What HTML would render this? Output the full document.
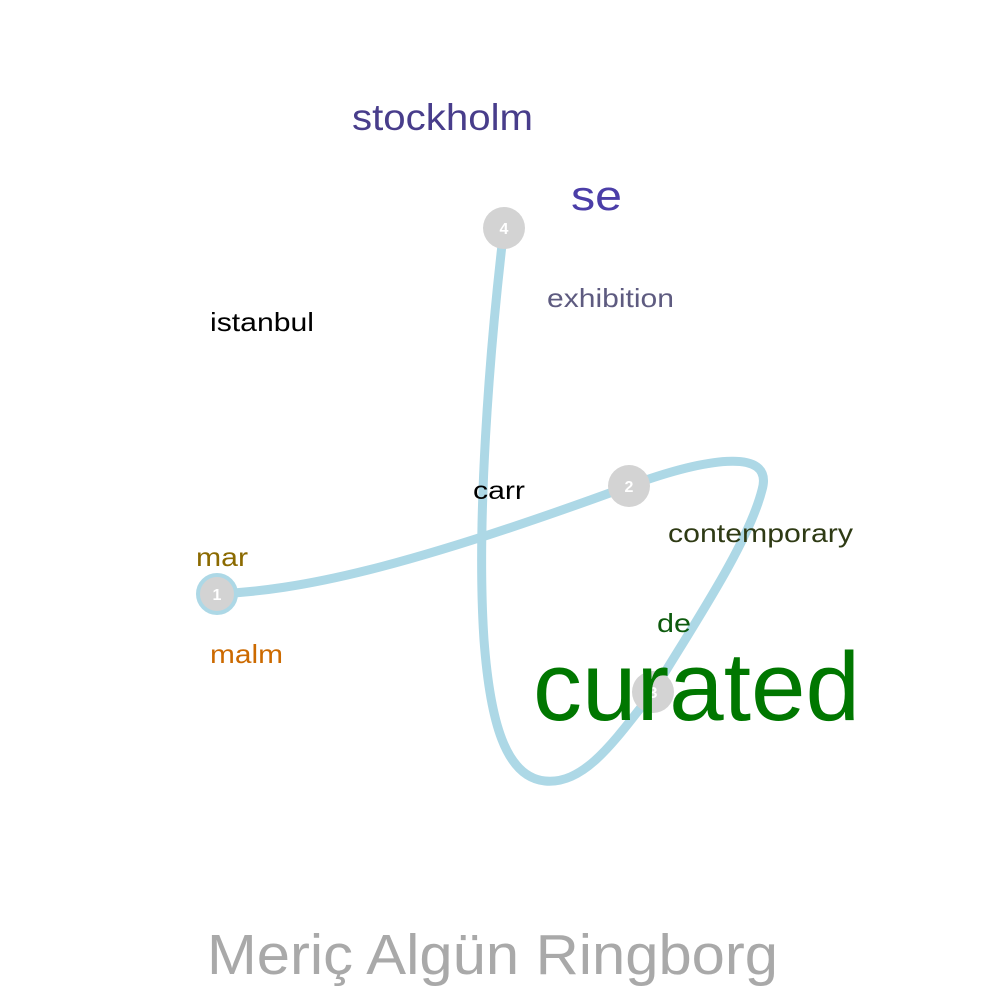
<!DOCTYPE html>
<html><head><meta charset="utf-8"><style>
html,body{margin:0;padding:0;background:#fff;width:1000px;height:1000px;overflow:hidden}
svg text{font-family:"Liberation Sans",sans-serif}
</style></head><body>
<svg width="1000" height="1000" viewBox="0 0 1000 1000" xmlns="http://www.w3.org/2000/svg">
<rect width="1000" height="1000" fill="#fff"/>
<path d="M217,594 C300,590 400,570 629,486 C700,460 775,445 762,490 C748,545 690,630 653,692 C615,740 585,785 545,781 C505,777 490,720 484,640 C476,520 490,350 502,245" fill="none" stroke="#add8e6" stroke-width="9" stroke-linecap="round"/>
<circle cx="217" cy="594" r="19" fill="#d3d3d3" stroke="#add8e6" stroke-width="4"/>
<circle cx="629" cy="486" r="21" fill="#d3d3d3"/>
<circle cx="653" cy="692" r="21" fill="#d3d3d3"/>
<circle cx="504" cy="228" r="21" fill="#d3d3d3"/>
<g fill="#fff" font-weight="bold" font-size="16" text-anchor="middle">
<text x="217" y="600">1</text><text x="629" y="492">2</text><text x="653" y="698">3</text><text x="504" y="234">4</text>
</g>
<g lengthAdjust="spacingAndGlyphs">
<text x="352" y="130" font-size="37" fill="#483d8b" textLength="181" lengthAdjust="spacingAndGlyphs">stockholm</text>
<text x="571" y="210" font-size="42" fill="#4b3ea8" textLength="51" lengthAdjust="spacingAndGlyphs">se</text>
<text x="547" y="307" font-size="26" fill="#5e5b80" textLength="127" lengthAdjust="spacingAndGlyphs">exhibition</text>
<text x="210" y="331" font-size="26" fill="#000" textLength="104" lengthAdjust="spacingAndGlyphs">istanbul</text>
<text x="473" y="499" font-size="25" fill="#000" textLength="52" lengthAdjust="spacingAndGlyphs">carr</text>
<text x="668" y="542" font-size="26" fill="#2e3a14" textLength="185" lengthAdjust="spacingAndGlyphs">contemporary</text>
<text x="196" y="566" font-size="26" fill="#8b6a00" textLength="52" lengthAdjust="spacingAndGlyphs">mar</text>
<text x="210" y="663" font-size="26" fill="#cc6a00" textLength="73" lengthAdjust="spacingAndGlyphs">malm</text>
<text x="657" y="632" font-size="26" fill="#0d5a0d" textLength="34" lengthAdjust="spacingAndGlyphs">de</text>
<text x="533" y="720" font-size="97" fill="#007700" textLength="327" lengthAdjust="spacingAndGlyphs">curated</text>
<text x="207" y="974" font-size="57" fill="#a9a9a9" textLength="571" lengthAdjust="spacingAndGlyphs">Meriç Algün Ringborg</text>
</g>
</svg>
</body></html>
